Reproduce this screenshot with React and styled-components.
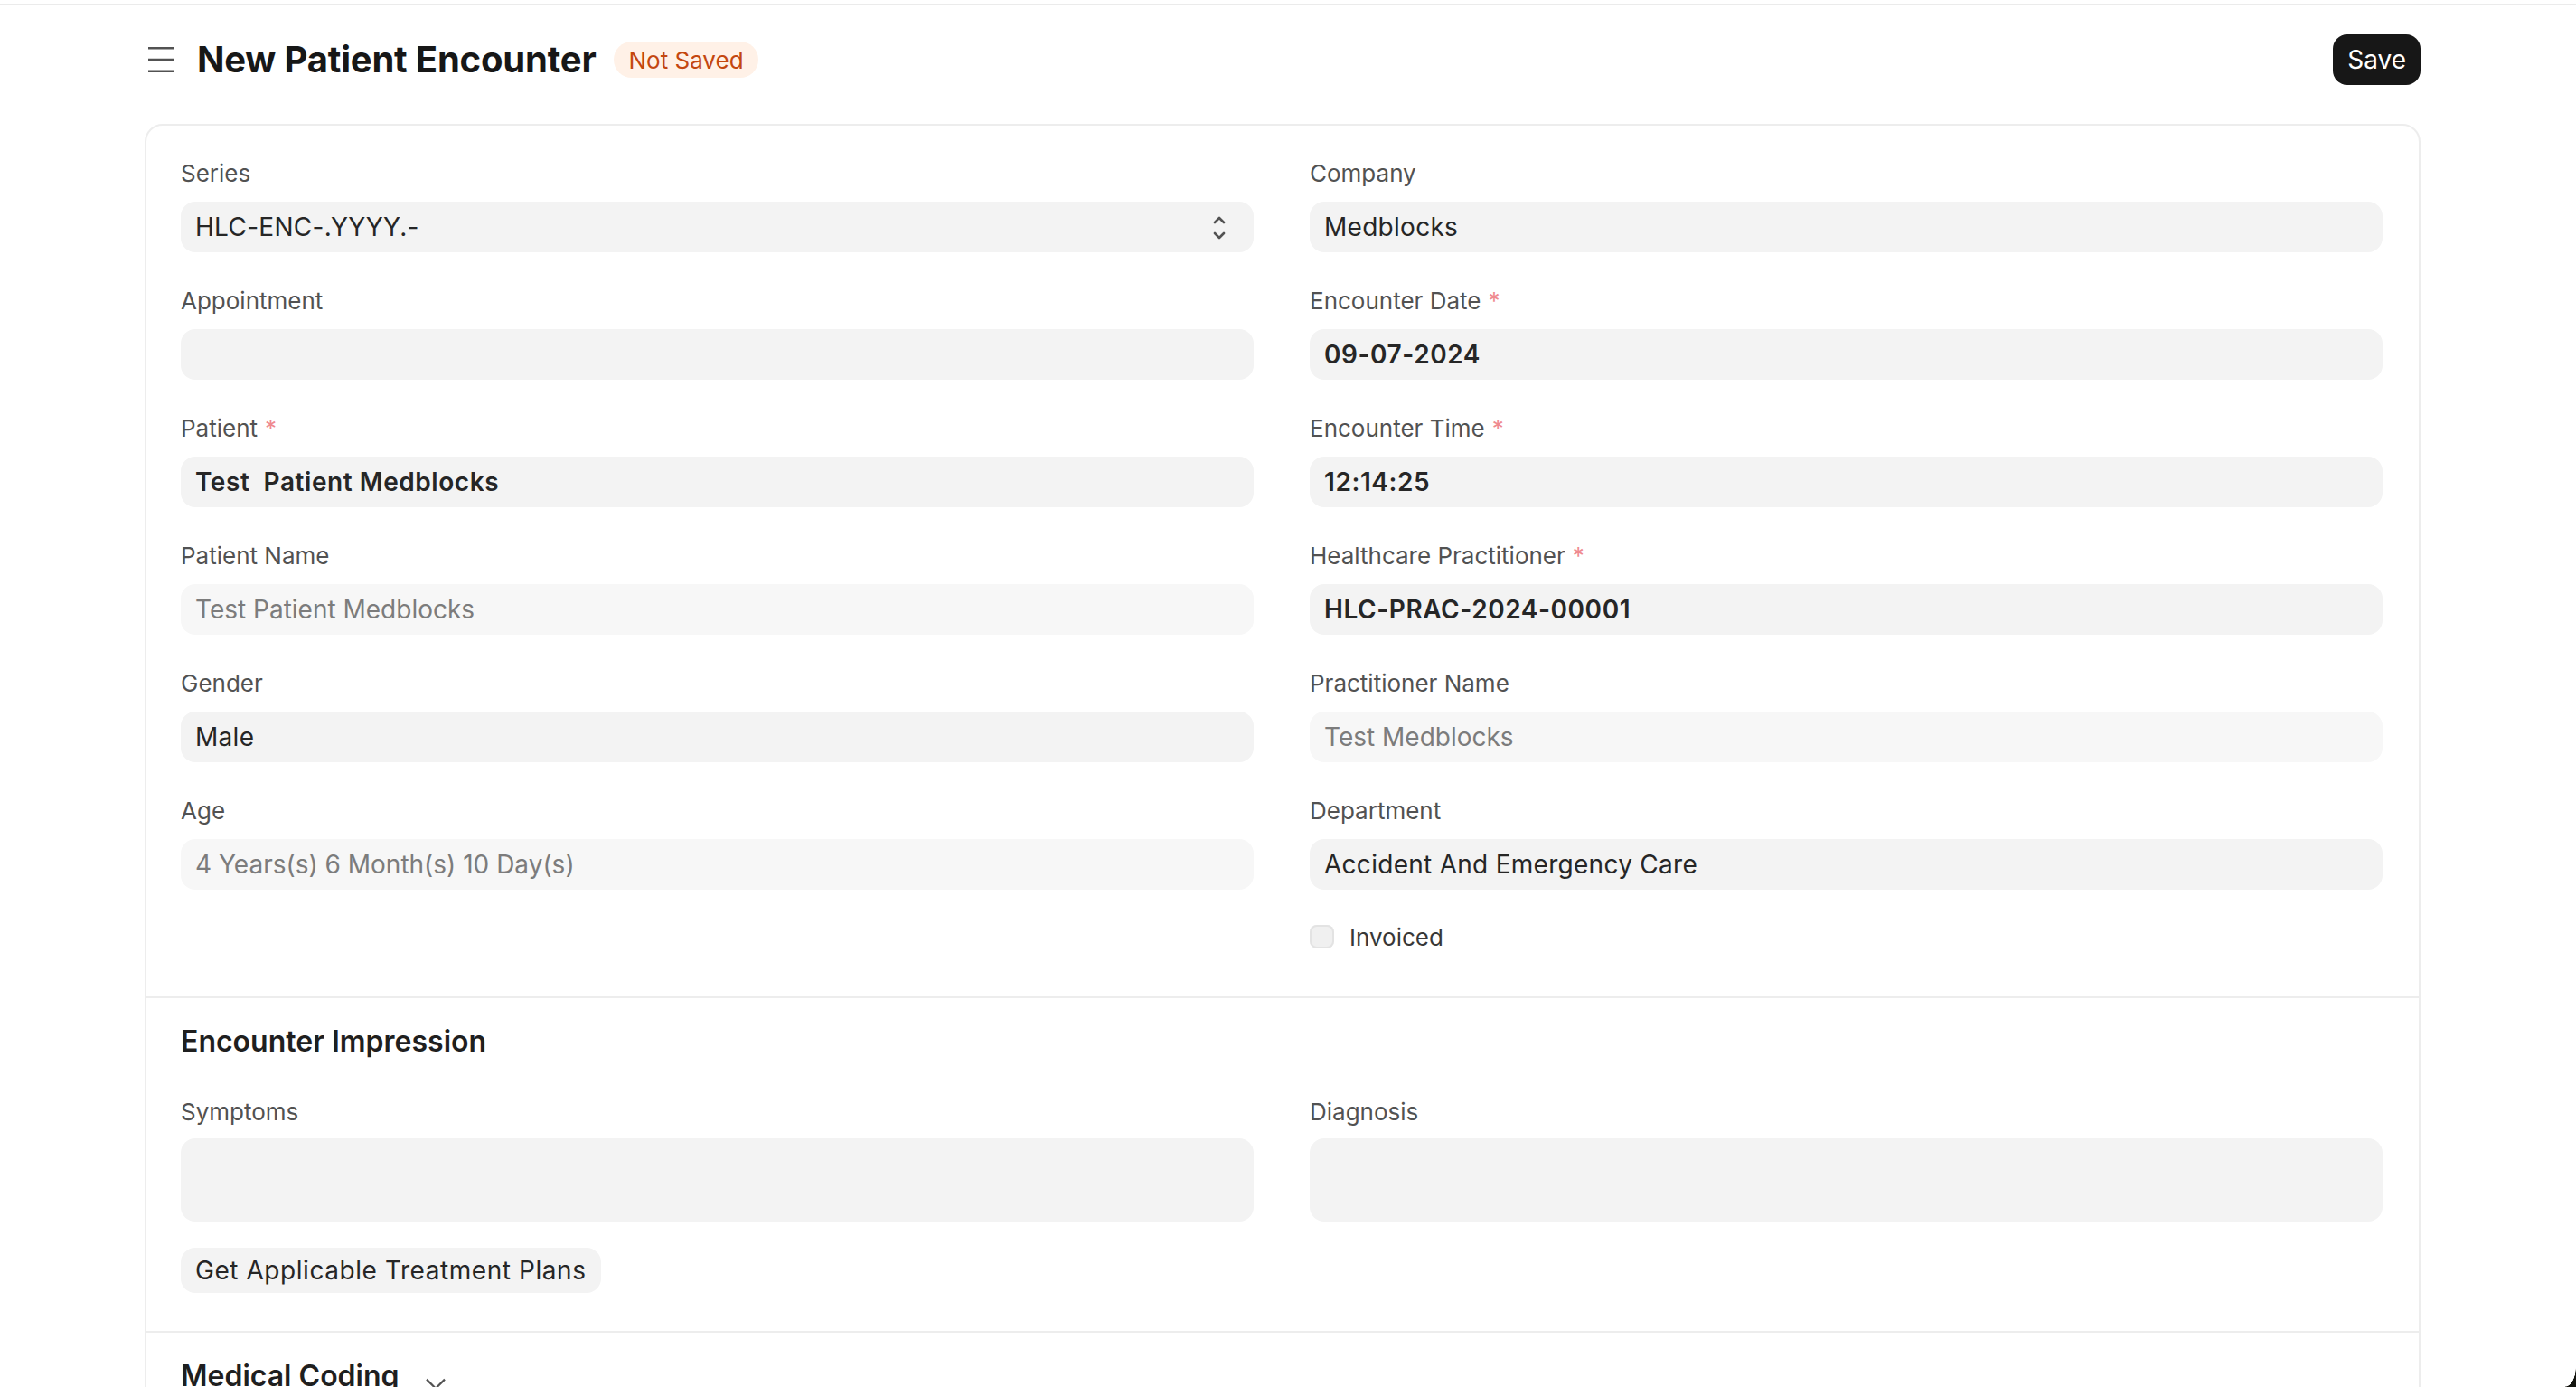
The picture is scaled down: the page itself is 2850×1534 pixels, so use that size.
import React from "react";
import styled, { createGlobalStyle } from "styled-components";

const GlobalStyle = createGlobalStyle`
  html, body {
    margin: 0;
    padding: 0;
    background: #ffffff;
  }
  body {
    font-family: Inter, "Noto Sans", "Liberation Sans", sans-serif;
    color: #171717;
    -webkit-font-smoothing: antialiased;
  }
`;

// the form was designed at 1425px wide, shown at twice that
const Page = styled.div`
  zoom: 2;
  height: 767px;
  overflow: hidden;
`;

const TopRule = styled.div`
  height: 2px;
  border-bottom: 1px solid #ebebeb;
`;

const Container = styled.div`
  width: 1259px;
  margin-left: 80px;
`;

const PageHead = styled.header`
  height: 60px;
  display: flex;
  align-items: center;
  justify-content: space-between;
`;

const TitleArea = styled.div`
  display: flex;
  align-items: center;
`;

const MenuButton = styled.span`
  display: flex;
  margin-left: 2px;
  margin-right: 13px;
  color: #525252;
`;

const Title = styled.h3`
  margin: 0;
  font-size: 20px;
  line-height: 24px;
  font-weight: 700;
  letter-spacing: -0.1px;
  color: #171717;
`;

const Badge = styled.span`
  margin-left: 10px;
  height: 20px;
  padding: 0 8px;
  border-radius: 10px;
  display: inline-flex;
  align-items: center;
  font-size: 13px;
  background: #fff1e7;
  color: #c4470f;
`;

const SaveButton = styled.button`
  height: 28px;
  padding: 0 8px;
  border: none;
  border-radius: 8px;
  background: #171717;
  color: #ffffff;
  font-family: inherit;
  font-size: 14px;
  cursor: pointer;
`;

const Card = styled.div`
  margin-top: 5.5px;
  border: 1px solid #ededed;
  border-radius: 10px;
`;

const Section = styled.section`
  padding: ${(p) => p.$pad || "18px 20px 6px 19px"};
  border-top: ${(p) => (p.$divided ? "1px solid #ededed" : "none")};
  min-height: ${(p) => p.$minHeight || "0"};
`;

const SectionHead = styled.div`
  display: flex;
  align-items: center;
  padding-top: 14px;
  margin-bottom: 20.5px;
  font-size: 16px;
  line-height: 20px;
  font-weight: 600;
  color: #1f1f1f;
`;

const Collapse = styled.span`
  display: flex;
  margin-left: 14px;
  margin-top: 9px;
  color: #525252;
`;

const Columns = styled.div`
  display: grid;
  grid-template-columns: 1fr 1fr;
  column-gap: 31px;
`;

const Column = styled.div`
  display: flex;
  flex-direction: column;
`;

const FieldGroup = styled.div`
  margin-bottom: ${(p) => (p.$tall ? "14.6px" : "18.5px")};
`;

const Label = styled.div`
  font-size: 13px;
  line-height: 17px;
  margin-bottom: ${(p) => (p.$tall ? "6.1px" : "7px")};
  color: #525252;

  ${(p) =>
    p.$reqd &&
    `
    &::after {
      content: "*";
      margin-left: 4px;
      color: #ef8a8f;
    }
  `}
`;

const Control = styled.div`
  height: ${(p) => (p.$tall ? "46px" : "28px")};
  padding: 0 8px;
  border-radius: 8px;
  box-sizing: border-box;
  display: flex;
  align-items: center;
  justify-content: space-between;
  background: ${(p) => (p.$readOnly ? "#f7f7f7" : "#f3f3f3")};
  color: ${(p) => (p.$readOnly ? "#7c7c7c" : "#262626")};
  font-size: 14px;
  font-weight: ${(p) => (p.$bold ? 600 : 400)};
  letter-spacing: ${(p) => (p.$readOnly ? "0" : p.$bold ? "0.02em" : "0.01em")};
  white-space: pre;
`;

const SelectArrows = styled.svg`
  margin-right: 7px;
  color: #525252;
`;

const CheckRow = styled.label`
  display: flex;
  align-items: center;
  height: 17px;
  margin-top: -1px;
  margin-bottom: 18.5px;
  font-size: 13px;
  color: #383838;
`;

const CheckBox = styled.span`
  width: 13.5px;
  height: 13px;
  border-radius: 4px;
  background: #f0f0f0;
  box-shadow: inset 0 0 0 1px #e3e3e3;
  margin-right: 8.5px;
`;

const SmallButton = styled.button`
  align-self: flex-start;
  height: 25px;
  padding: 0 8px;
  margin-bottom: 17.5px;
  border: none;
  border-radius: 8px;
  background: #f3f3f3;
  color: #262626;
  font-family: inherit;
  font-size: 14px;
  letter-spacing: 0.02em;
`;

const ScreenCorner = styled.div`
  position: fixed;
  right: 0;
  bottom: 0;
  width: 6px;
  height: 11px;
  background: radial-gradient(ellipse 6px 11px at 0 0, transparent 96%, #14150f 100%);
`;

const Field = ({ label, reqd, value, bold, readOnly, tall, children }) => (
  <FieldGroup $tall={tall}>
    <Label $reqd={reqd} $tall={tall}>
      {label}
    </Label>
    <Control $bold={bold} $readOnly={readOnly} $tall={tall}>
      <span>{value}</span>
      {children}
    </Control>
  </FieldGroup>
);

const MenuIcon = () => (
  <svg width="14" height="14" viewBox="0 0 14 14" fill="none" stroke="currentColor" strokeWidth="1.2">
    <path d="M0 0.6h14M0 7h14M0 13.4h14" />
  </svg>
);

const App = () => {
  return (
    <Page>
      <GlobalStyle />
      <TopRule />
      <Container>
        <PageHead>
          <TitleArea>
            <MenuButton>
              <MenuIcon />
            </MenuButton>
            <Title>New Patient Encounter</Title>
            <Badge>Not Saved</Badge>
          </TitleArea>
          <SaveButton>Save</SaveButton>
        </PageHead>

        <Card>
          <Section>
            <Columns>
              <Column>
                <Field label="Series" value="HLC-ENC-.YYYY.-">
                  <SelectArrows width="8" height="15" viewBox="0 0 8 15" fill="none" stroke="currentColor" strokeWidth="1.3" strokeLinecap="round" strokeLinejoin="round">
                    <path d="M1.5 5L4 2.5L6.5 5M1.5 11L4 13.5L6.5 11" />
                  </SelectArrows>
                </Field>
                <Field label="Appointment" value="" />
                <Field label="Patient" reqd value="Test  Patient Medblocks" bold />
                <Field label="Patient Name" value="Test Patient Medblocks" readOnly />
                <Field label="Gender" value="Male" />
                <Field label="Age" value="4 Years(s) 6 Month(s) 10 Day(s)" readOnly />
              </Column>
              <Column>
                <Field label="Company" value="Medblocks" />
                <Field label="Encounter Date" reqd value="09-07-2024" bold />
                <Field label="Encounter Time" reqd value="12:14:25" bold />
                <Field label="Healthcare Practitioner" reqd value="HLC-PRAC-2024-00001" bold />
                <Field label="Practitioner Name" value="Test Medblocks" readOnly />
                <Field label="Department" value="Accident And Emergency Care" />
                <CheckRow>
                  <CheckBox />
                  Invoiced
                </CheckRow>
              </Column>
            </Columns>
          </Section>

          <Section $divided $pad="0 20px 3.5px 19px">
            <SectionHead>Encounter Impression</SectionHead>
            <Columns>
              <Column>
                <Field label="Symptoms" value="" tall />
                <SmallButton>Get Applicable Treatment Plans</SmallButton>
              </Column>
              <Column>
                <Field label="Diagnosis" value="" tall />
              </Column>
            </Columns>
          </Section>

          <Section $divided $pad="0 20px 0 19px" $minHeight="120px">
            <SectionHead>
              Medical Coding
              <Collapse>
                <svg width="12" height="7" viewBox="0 0 12 7" fill="none" stroke="currentColor" strokeWidth="1.1">
                  <path d="M1 0.8L6 5.8L11 0.8" />
                </svg>
              </Collapse>
            </SectionHead>
          </Section>
        </Card>
      </Container>
      <ScreenCorner />
    </Page>
  );
};

export default App;
